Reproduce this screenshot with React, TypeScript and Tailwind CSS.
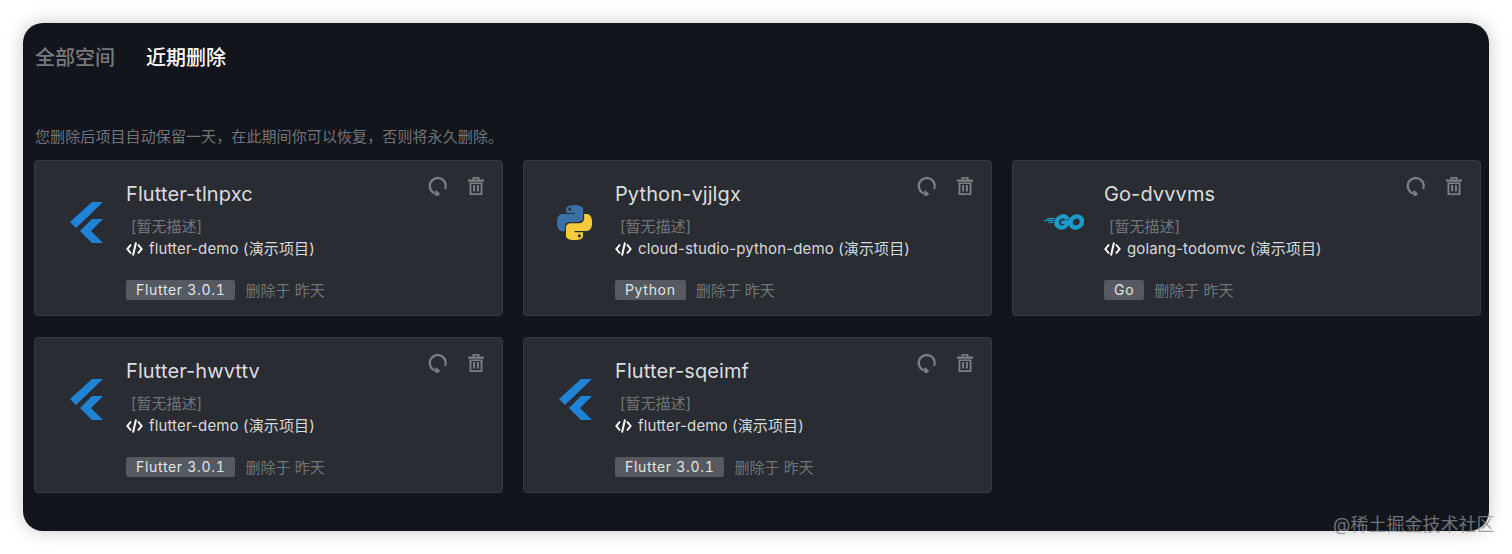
import { SiGo } from "react-icons/si";

function FlutterLogo() {
  return (
    <svg width="34" height="42" viewBox="0 0 34 42" fill="#1f83d6">
      <polygon points="0,20 22,0 33,0 6,26" />
      <polygon points="10,29 22,17 33,17 21,29 33,41 22,41" />
    </svg>
  );
}

function PythonLogo() {
  const half =
    "M54.9 0C26.9 0 28.6 12.2 28.6 12.2l0 12.6h26.7v3.8H18s-18-2-18 26.3 15.7 27.3 15.7 27.3h9.4V68.9s-.5-15.7 15.5-15.7h26.6s15 .2 15-14.5V14.4S84.6 0 54.9 0zM40.1 8.5c2.7 0 4.8 2.2 4.8 4.8s-2.2 4.8-4.8 4.8-4.8-2.2-4.8-4.8 2.2-4.8 4.8-4.8z";
  return (
    <svg width="35" height="35" viewBox="0 0 110 110">
      <path d={half} fill="#3a70a3" />
      <path d={half} fill="#f5cb3c" transform="rotate(180 55.2 55.2)" />
    </svg>
  );
}

function CodeIcon() {
  return (
    <svg width="17" height="16" viewBox="0 0 17 16" fill="none" stroke="#ffffff" strokeWidth="2" className="shrink-0">
      <path d="M5 3.5L1.4 8 5 12.5" />
      <path d="M12 3.5L15.6 8 12 12.5" />
      <path d="M10 1.5L7 14.5" />
    </svg>
  );
}

function RestoreIcon() {
  return (
    <svg width="20" height="20" viewBox="0 0 20 20" fill="none" stroke="#7b7e83" strokeWidth="2.3">
      <path d="M17.2 13A8 8 0 1 0 10 18" />
      <path d="M7.6 15l3.2 3-3 2.2" strokeWidth="1.9" />
    </svg>
  );
}

function TrashIcon() {
  return (
    <svg width="18" height="20" viewBox="0 0 18 20" fill="#7b7e83">
      <path
        fillRule="evenodd"
        d="M5.5 1h7v2.5H17v2.2H1V3.5h4.500zM7.300 2.500v1h3.400v-1zM2.500 6.500h13v12.500h-13zM4.400 8v9.200h9.200V8z"
      />
      <rect x="6.100" y="9" width="2" height="6.500" />
      <rect x="9.900" y="9" width="2" height="6.500" />
    </svg>
  );
}

const projects = [
  { name: "Flutter-tlnpxc", repo: "flutter-demo (演示项目)", tag: "Flutter 3.0.1", logo: <FlutterLogo />, logoBox: "pl-[14px] pt-[41px]" },
  { name: "Python-vjjlgx", repo: "cloud-studio-python-demo (演示项目)", tag: "Python", logo: <PythonLogo />, logoBox: "pl-[12px] pt-[44px]" },
  { name: "Go-dvvvms", repo: "golang-todomvc (演示项目)", tag: "Go", logo: <SiGo size={40} color="#1b9ccb" stroke="#1b9ccb" strokeWidth={0.4} />, logoBox: "pl-[10px] pt-[41px]" },
  { name: "Flutter-hwvttv", repo: "flutter-demo (演示项目)", tag: "Flutter 3.0.1", logo: <FlutterLogo />, logoBox: "pl-[14px] pt-[41px]" },
  { name: "Flutter-sqeimf", repo: "flutter-demo (演示项目)", tag: "Flutter 3.0.1", logo: <FlutterLogo />, logoBox: "pl-[14px] pt-[41px]" },
];

export default function App() {
  return (
    <div className="relative h-[554px] w-[1512px] overflow-hidden bg-white p-[23px] font-['Inter','Noto_Sans_CJK_SC',sans-serif]">
      <div className="h-[508px] rounded-[20px] bg-[#12151c] px-[11px] shadow-[0_0_18px_rgba(0,0,0,0.22)]">
        <div className="flex h-[68px] items-center gap-[31px] pl-px pt-[1px] text-xl font-medium leading-none">
          <span className="text-[#77797d]">全部空间</span>
          <span className="text-white">近期删除</span>
        </div>
        <p className="mt-[36px] h-[33px] pl-px text-[15px] leading-5 tracking-[0.1px] text-[#727478]">
          您删除后项目自动保留一天，在此期间你可以恢复，否则将永久删除。
        </p>
        <div className="grid w-[1447px] grid-cols-3 gap-x-5 gap-y-[21px]">
          {projects.map((p) => (
            <div
              key={p.name}
              className="flex h-[156px] rounded-[4px] border border-[#36393f] bg-[#292c32] pl-[21px] pr-[17px]"
            >
              <div className={`w-[71px] shrink-0 ${p.logoBox}`}>{p.logo}</div>
              <div className="-ml-px min-w-0 flex-1 pt-[19px]">
                <div className="text-xl leading-[28px] tracking-[0.1px] text-[#dcdddf]">{p.name}</div>
                <div className="mt-[9px] pl-[5px] text-[15px] leading-5 text-[#727478]">[暂无描述]</div>
                <div className="mt-[2px] flex items-center gap-[6px] text-[15px] leading-5 tracking-[0.13px] text-[#d8d9db]">
                  <CodeIcon />
                  {p.repo}
                </div>
                <div className="mt-[21px] flex items-start gap-[10px]">
                  <span className="flex h-5 items-center rounded-[2px] bg-[#56595f] px-[10px] text-sm tabular-nums tracking-[0.68px] text-[#e4e5e6]">
                    {p.tag}
                  </span>
                  <span className="pt-px text-[15px] leading-5 text-[#727478]">删除于 昨天</span>
                </div>
              </div>
              <div className="flex shrink-0 items-start gap-[19px] pt-[15px]">
                <RestoreIcon />
                <TrashIcon />
              </div>
            </div>
          ))}
        </div>
      </div>
      <span className="absolute left-[1333px] top-[513px] text-lg leading-6 text-[#8a8c8f]/80">@稀土掘金技术社区</span>
    </div>
  );
}
